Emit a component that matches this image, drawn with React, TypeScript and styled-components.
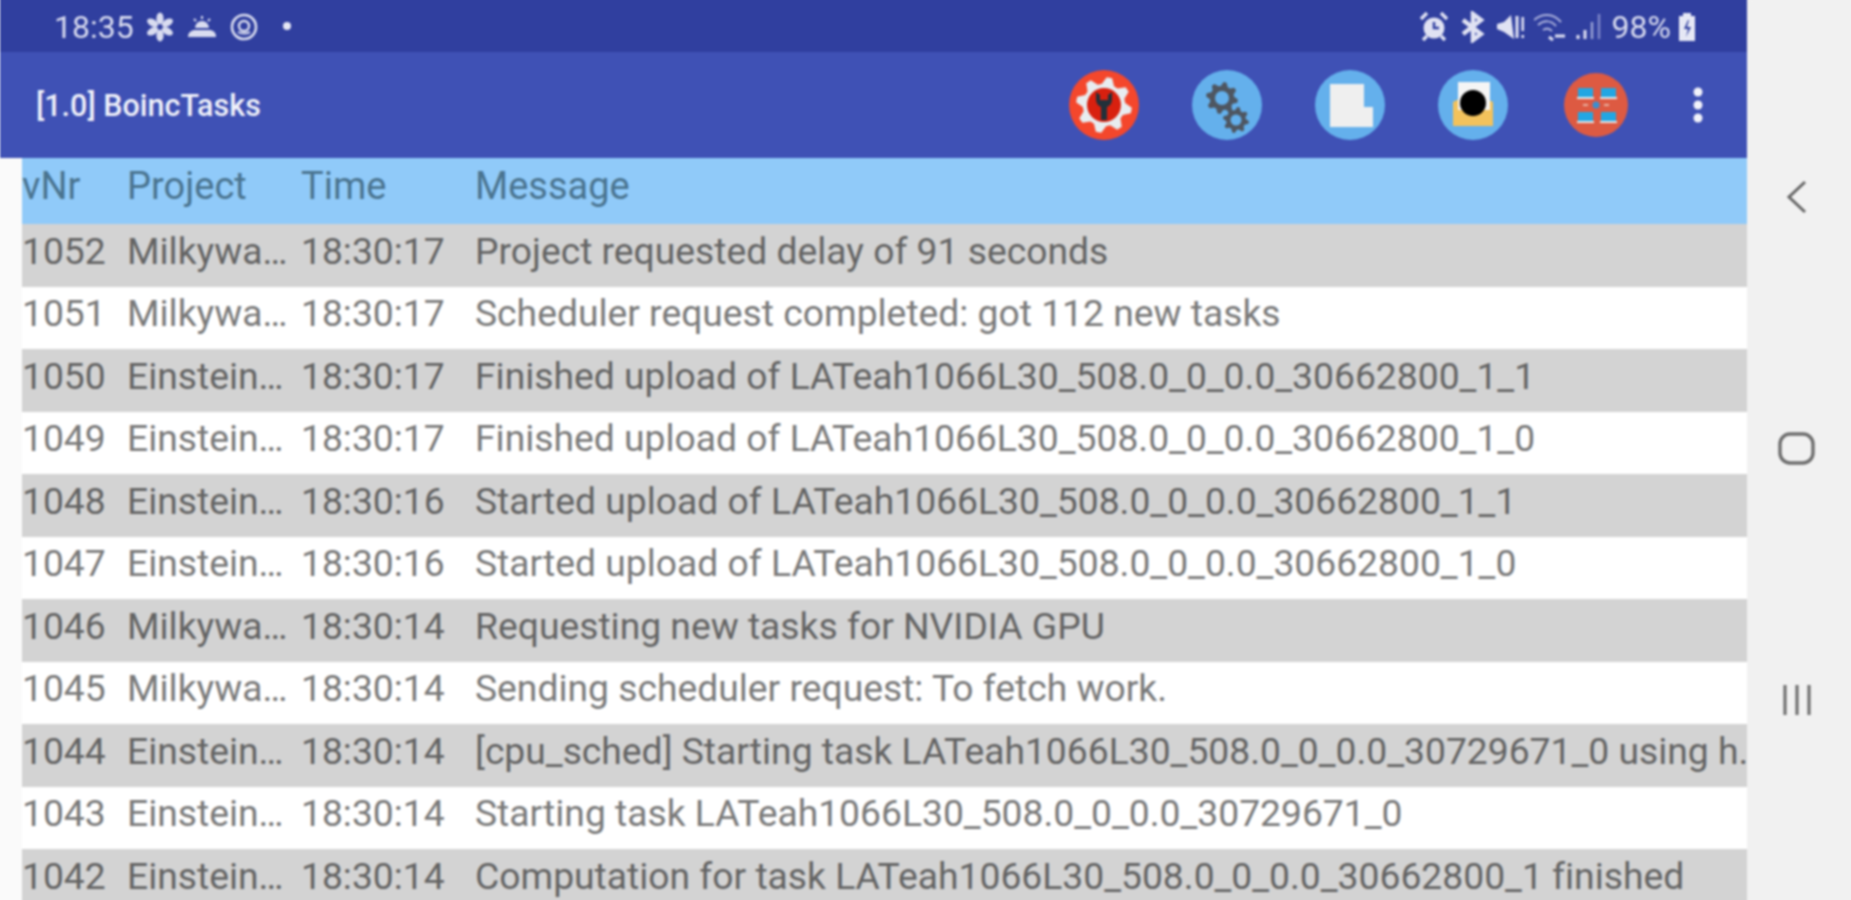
import React from "react";
import styled, { createGlobalStyle } from "styled-components";

const Global = createGlobalStyle`
  html, body { margin: 0; padding: 0; background: #f1f1f1; overflow: hidden; }
  #root { width: 1851px; height: 900px; overflow: hidden; }
`;

const Screen = styled.div`
  display: flex;
  width: 1851px;
  height: 910px;
  font-family: Roboto, "Liberation Sans", sans-serif;
  font-variant-ligatures: none;
  filter: blur(1.2px);
`;
const Main = styled.div`
  display: flex;
  flex-direction: column;
  width: 1747px;
  height: 910px;
  flex: none;
  background: #fafafa;
  box-shadow: -6px 0 0 #fafafa;
`;
const StatusBar = styled.div`
  display: flex;
  align-items: center;
  justify-content: space-between;
  height: 52px;
  flex: none;
  padding: 2px 50px 0 54px;
  box-sizing: border-box;
  background: #303f9f;
  color: #d9dcf0;
  box-shadow: 0 -6px 0 #303f9f;
`;
const StatusGroup = styled.div`
  display: flex;
  align-items: center;
  gap: ${(p: { $gap: number }) => p.$gap}px;
`;
const Clock = styled.span`
  font-size: 32px;
  line-height: 50px;
  margin-right: -1px;
`;
const Battery = styled.span`
  font-size: 32px;
  line-height: 50px;
  margin-right: -4px;
`;
const AppBar = styled.div`
  display: flex;
  align-items: center;
  justify-content: space-between;
  height: 106px;
  flex: none;
  padding: 0 43px 0 36px;
  box-sizing: border-box;
  background: #3f51b5;
`;
const Title = styled.div`
  color: #f0f1fa;
  font-size: 30.5px;
  font-weight: 500;
`;
const Actions = styled.div`
  display: flex;
  align-items: center;
  gap: 53px;
`;
const ActionIcon = styled.svg`
  display: block;
  width: 70px;
  height: 70px;
`;
const Overflow = styled.svg`
  display: block;
  width: 12px;
  height: 40px;
  margin-left: 8px;
`;
const Table = styled.div`
  display: flex;
  flex-direction: column;
  flex: 1;
  min-height: 0;
  margin-left: 22px;
  overflow: hidden;
`;
const Row = styled.div<{ $bg: string; $color: string; $h: number; $lift: number; $size: number }>`
  display: grid;
  grid-template-columns: 105px 174px 174px minmax(0, 1fr);
  align-items: center;
  flex: none;
  box-sizing: border-box;
  height: ${(p) => p.$h}px;
  padding-bottom: ${(p) => p.$lift}px;
  background: ${(p) => p.$bg};
  color: ${(p) => p.$color};
  font-size: ${(p) => p.$size}px;
  line-height: 44px;
`;
const Cell = styled.div`
  white-space: nowrap;
  overflow: hidden;
`;
const Nav = styled.div`
  display: flex;
  flex-direction: column;
  align-items: center;
  justify-content: space-between;
  flex: 1;
  height: 910px;
  box-sizing: border-box;
  padding: 176px 4px 188px 0;
  background: #f1f1f1;
  box-shadow: 6px -6px 0 #f1f1f1;
`;
const NavIcon = styled.svg`
  display: block;
  width: 44px;
  height: 44px;
`;

const rows = [
  ["1052", "Milkywa…", "18:30:17", "Project requested delay of 91 seconds"],
  ["1051", "Milkywa…", "18:30:17", "Scheduler request completed: got 112 new tasks"],
  ["1050", "Einstein…", "18:30:17", "Finished upload of LATeah1066L30_508.0_0_0.0_30662800_1_1"],
  ["1049", "Einstein…", "18:30:17", "Finished upload of LATeah1066L30_508.0_0_0.0_30662800_1_0"],
  ["1048", "Einstein…", "18:30:16", "Started upload of LATeah1066L30_508.0_0_0.0_30662800_1_1"],
  ["1047", "Einstein…", "18:30:16", "Started upload of LATeah1066L30_508.0_0_0.0_30662800_1_0"],
  ["1046", "Milkywa…", "18:30:14", "Requesting new tasks for NVIDIA GPU"],
  ["1045", "Milkywa…", "18:30:14", "Sending scheduler request: To fetch work."],
  ["1044", "Einstein…", "18:30:14", "[cpu_sched] Starting task LATeah1066L30_508.0_0_0.0_30729671_0 using h."],
  ["1043", "Einstein…", "18:30:14", "Starting task LATeah1066L30_508.0_0_0.0_30729671_0"],
  ["1042", "Einstein…", "18:30:14", "Computation for task LATeah1066L30_508.0_0_0.0_30662800_1 finished"],
];

const gearPath = (cx: number, cy: number, r: number, teeth: number) => {
  const pts: string[] = [];
  const n = teeth * 4;
  for (let i = 0; i < n; i++) {
    const a = ((i + 0.5) / n) * Math.PI * 2;
    const rr = i % 4 < 2 ? r : r * 0.76;
    pts.push(`${(cx + rr * Math.cos(a)).toFixed(2)},${(cy + rr * Math.sin(a)).toFixed(2)}`);
  }
  return pts.join(" ");
};

const Sm = ({ w, children }: { w: number; children: React.ReactNode }) => (
  <svg width={w} height={32} viewBox={`0 0 ${w} 32`} style={{ display: "block" }}>
    {children}
  </svg>
);

export default function App() {
  return (
    <>
      <Global />
      <Screen>
        <Main>
          <StatusBar>
            <StatusGroup $gap={13}>
              <Clock>18:35</Clock>
              <Sm w={28}>
                <g fill="#d9dcf0">
                  {[0, 60, 120, 180, 240, 300].map((a) => (
                    <ellipse key={a} cx="14" cy="7.5" rx="3.6" ry="6" transform={`rotate(${a} 14 16)`} />
                  ))}
                </g>
                <circle cx="14" cy="16" r="1.6" fill="#303f9f" />
              </Sm>
              <Sm w={30}>
                <path d="M8 17a7 7 0 0 1 14 0z" fill="#d9dcf0" />
                <path d="M15 5v3M7 8l2 2M23 8l-2 2" stroke="#d9dcf0" strokeWidth="2" />
                <path d="M1 26c0-5 4-7 7-7h14c4 0 7 2 7 7z" fill="#d9dcf0" />
              </Sm>
              <Sm w={28}>
                <circle cx="14" cy="16" r="12" fill="none" stroke="#d9dcf0" strokeWidth="2.6" />
                <circle cx="14" cy="15" r="5" fill="none" stroke="#d9dcf0" strokeWidth="2.4" />
                <path d="M8 21c3 2 9 2 12 0" fill="none" stroke="#d9dcf0" strokeWidth="2" />
              </Sm>
              <Sm w={28}>
                <circle cx="16" cy="15" r="4" fill="#e6e8f5" />
              </Sm>
            </StatusGroup>
            <StatusGroup $gap={10}>
              <Sm w={28}>
                <circle cx="14" cy="17" r="10.5" fill="#e0e2f3" />
                <path d="M14 11v6h5" fill="none" stroke="#303f9f" strokeWidth="2.5" />
                <path d="M1 8l6-6M27 8l-6-6M3 29l4-4M25 29l-4-4" stroke="#e0e2f3" strokeWidth="3.4" />
              </Sm>
              <Sm w={28}>
                <path d="M5 9l18 14-8 6V3l8 6L5 23" fill="none" stroke="#e0e2f3" strokeWidth="4.4" />
              </Sm>
              <Sm w={28}>
                <path d="M1 13l7-2 7-7 3 24-10-7-7-3z" fill="#e0e2f3" />
                <path d="M21 5v22M27 6v14M27 24v3" stroke="#e0e2f3" strokeWidth="3" />
              </Sm>
              <Sm w={32}>
                <path d="M0 9c8-7 19-7 27 2M4 14c6-5 13-5 18 1M9 19c3-2 6-2 9 1" fill="none" stroke="#aab0dc" strokeWidth="2" />
                <path d="M21 25h10M15 26l4 3" stroke="#e0e2f3" strokeWidth="3" />
              </Sm>
              <Sm w={26}>
                <path d="M2 28v-4" stroke="#e0e2f3" strokeWidth="3" />
                <path d="M9 28v-9" stroke="#dfe1f3" strokeWidth="3" />
                <path d="M16 28V11" stroke="#98a0d4" strokeWidth="2.5" />
                <path d="M23 28V3" stroke="#7c86c8" strokeWidth="2.5" />
              </Sm>
              <Battery>98%</Battery>
              <Sm w={20}>
                <path d="M6 2h8v3h4v25H2V5h4z" fill="#e6e8f5" />
                <path d="M11 9l-4 9h4l-2 8 5-10h-4l2-7z" fill="#303f9f" />
              </Sm>
            </StatusGroup>
          </StatusBar>
          <AppBar>
            <Title>[1.0] BoincTasks</Title>
            <Actions>
              <ActionIcon viewBox="0 0 70 70">
                <circle cx="35" cy="35" r="35" fill="#f4472c" />
                <polygon points={gearPath(35, 35, 28, 8)} fill="#e8edf0" />
                <circle cx="35" cy="35" r="17" fill="#d8200f" />
                <path d="M27 22v8a8 8 0 0 0 5 7v13h6V37a8 8 0 0 0 5-7v-8l-4 3v5h-8v-5z" fill="#22303a" />
              </ActionIcon>
              <ActionIcon viewBox="0 0 70 70">
                <circle cx="35" cy="35" r="35" fill="#64b0ec" />
                <polygon points={gearPath(30, 28, 16, 8)} fill="#4e5661" />
                <circle cx="30" cy="28" r="7" fill="#64b0ec" />
                <polygon points={gearPath(44, 50, 13, 8)} fill="#4e5661" />
                <circle cx="44" cy="50" r="5.5" fill="#64b0ec" />
              </ActionIcon>
              <ActionIcon viewBox="0 0 70 70">
                <circle cx="35" cy="35" r="35" fill="#64b0ec" />
                <path d="M15 14h34v23h9v20H15z" fill="#efefef" />
              </ActionIcon>
              <ActionIcon viewBox="0 0 70 70">
                <circle cx="35" cy="35" r="35" fill="#64b0ec" />
                <path d="M15 32l12-6h16l12 6v24H15z" fill="#f2c25c" />
                <rect x="20" y="12" width="32" height="28" fill="#f5f5f5" />
                <circle cx="35" cy="33" r="13" fill="#000" />
              </ActionIcon>
              <ActionIcon viewBox="0 0 70 70">
                <circle cx="35" cy="35" r="32" fill="#dd5a42" />
                {[
                  [17, 18],
                  [40, 18],
                  [17, 42],
                  [40, 42],
                ].map(([x, y]) => (
                  <g key={`${x}-${y}`}>
                    <rect x={x} y={y} width="15" height="9" fill="#22a6e2" />
                    <rect x={x - 1} y={y + 9} width="17" height="2" fill="#e8e8e8" />
                  </g>
                ))}
                <circle cx="35" cy="35" r="3.5" fill="#3a8fd0" />
                <path d="M22 35h5M43 35h5" stroke="#e8b0a0" strokeWidth="2" />
              </ActionIcon>
              <Overflow viewBox="0 0 12 40">
                <circle cx="6" cy="7" r="4.5" fill="#f2f3fb" />
                <circle cx="6" cy="20" r="4.5" fill="#f2f3fb" />
                <circle cx="6" cy="33" r="4.5" fill="#f2f3fb" />
              </Overflow>
            </Actions>
          </AppBar>
          <Table>
            <Row $bg="#90caf9" $color="#4a7490" $h={66} $lift={11} $size={38}>
              <Cell>vNr</Cell>
              <Cell>Project</Cell>
              <Cell>Time</Cell>
              <Cell>Message</Cell>
            </Row>
            {rows.map((r, i) => (
              <Row key={r[0]} $bg={i % 2 === 0 ? "#d3d3d3" : "#ffffff"} $color={i % 2 === 0 ? "#646464" : "#7a7a7a"} $h={62.5} $lift={9} $size={37.25}>
                <Cell>{r[0]}</Cell>
                <Cell>{r[1]}</Cell>
                <Cell>{r[2]}</Cell>
                <Cell>{r[3]}</Cell>
              </Row>
            ))}
          </Table>
        </Main>
        <Nav>
          <NavIcon viewBox="0 0 44 44">
            <path d="M30 6L14 21l16 15" fill="none" stroke="#666" strokeWidth="3" />
          </NavIcon>
          <NavIcon viewBox="0 0 44 44">
            <rect x="5" y="7" width="33" height="29" rx="10" fill="none" stroke="#6e6e6e" strokeWidth="3.4" />
          </NavIcon>
          <NavIcon viewBox="0 0 44 44">
            <path d="M10 7v30M22 7v30M34 7v30" fill="none" stroke="#707070" strokeWidth="3.2" />
          </NavIcon>
        </Nav>
      </Screen>
    </>
  );
}
